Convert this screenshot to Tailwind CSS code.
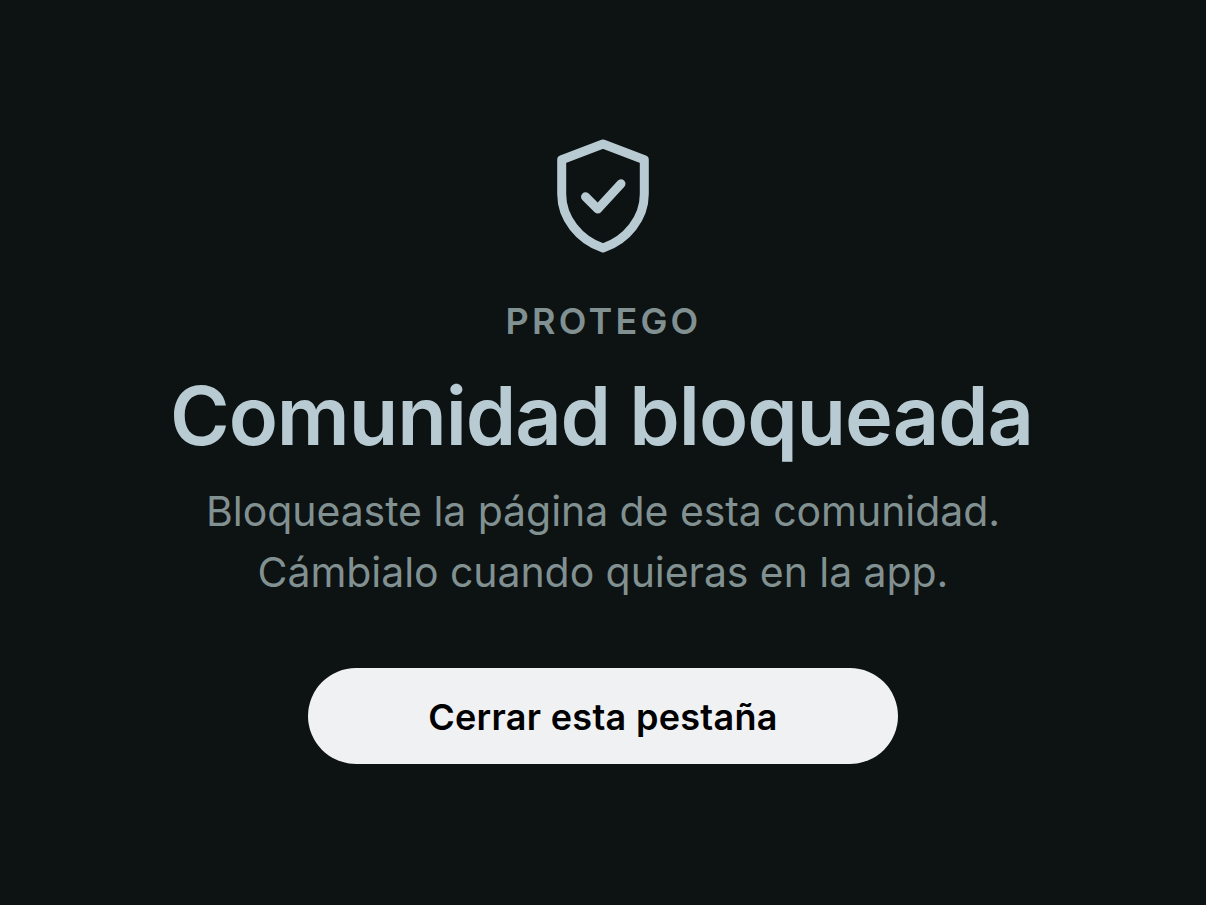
<!DOCTYPE html>
<html lang="es">
<head>
    <meta charset="UTF-8">
    <meta name="viewport" content="width=device-width, initial-scale=1.0">
    <title>Protego</title>
    <script src="https://cdn.jsdelivr.net/npm/@tailwindcss/browser@4"></script>
</head>
<body class="bg-[#0d1213] h-screen overflow-hidden font-['Inter',sans-serif]">
    <main class="flex flex-col items-center text-center pt-[139px]">
        <!-- Shield -->
        <svg class="w-[92px] h-[114px]" viewBox="0 0 92 114" fill="none" stroke="#b8cbd3" stroke-width="9" stroke-linecap="round" stroke-linejoin="round">
            <path d="M46 5 87.300 20.700V55C87.300 79 70 101 46 109 22 101 4.700 79 4.700 55V20.700Z"/>
            <path d="M28.500 57.800 40.800 70 64 44.800"/>
        </svg>
        <p class="mt-[48px] pl-px text-[36px] leading-[41px] font-semibold tracking-[3.2px] text-[#819090]">PROTEGO</p>
        <h1 class="mt-[29px] pr-[3px] text-[81px] leading-[90px] font-semibold tracking-[-1.1px] text-[#b8cbd3] whitespace-nowrap">Comunidad bloqueada</h1>
        <p class="mt-[20px] text-[41px] leading-[61px] tracking-[-0.07px] text-[#819090] whitespace-nowrap">
            Bloqueaste la página de esta comunidad.<br>
            Cámbialo cuando quieras en la app.
        </p>
        <button class="mt-[65px] w-[590px] h-[96px] pt-[2px] rounded-full bg-[#eff1f3] text-black text-[36px] font-semibold tracking-[0.3px] cursor-pointer">Cerrar esta pestaña</button>
    </main>
</body>
</html>
